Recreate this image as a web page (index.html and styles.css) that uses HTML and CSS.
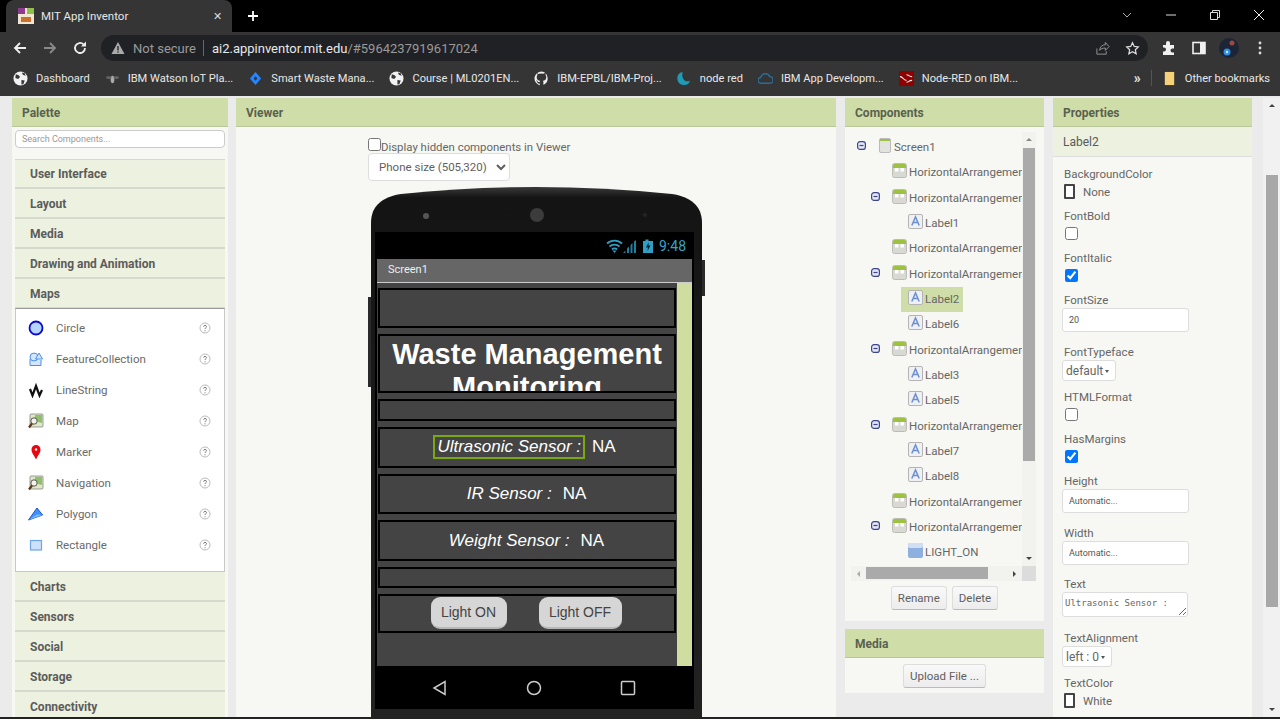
FILE: index.html
```html
<!DOCTYPE html>
<html lang="en">
<head>
  <meta charset="UTF-8" />
  <title>MIT App Inventor</title>
  <link rel="stylesheet" href="styles.css">
</head>
<body>

  <!-- icon sprites -->
  <svg class="sprites" width="0" height="0">
    <symbol id="i-globe" viewBox="0 0 16 16">
      <circle cx="8" cy="8" r="7.5" fill="#f1f1f1"/>
      <path d="M3 3.5l3 1 1.5 2-2 2-3-1zM9 9.5l3.5.5-1.5 4-2 .5zM9.5 1.5l1 2.5 3 1-1-2.5z" fill="#35363a"/>
    </symbol>
    <symbol id="i-help" viewBox="0 0 12 12">
      <circle cx="6" cy="6" r="5" fill="#fff" stroke="#bbb" stroke-width="1"/>
      <path d="M4.6 4.7c0-1.8 2.9-1.800 2.900 0 0 1.100-1.500 1.100-1.500 2.300M6 8.300v1" fill="none" stroke="#777" stroke-width="1"/>
    </symbol>
    <symbol id="i-arrangement" viewBox="0 0 15 15">
      <rect x=".5" y=".5" width="14" height="14" rx="2" fill="#d9d9d4" stroke="#bcbcb4"/>
      <path d="M1 2.5A1.5 1.5 0 0 1 2.500 1h10A1.500 1.500 0 0 1 14 2.500V5H1z" fill="#9cc23f"/>
      <rect x="3" y="5" width="3.500" height="3.500" fill="#fff"/>
      <rect x="8.500" y="5" width="3.500" height="3.500" fill="#fff"/>
    </symbol>
    <symbol id="i-label" viewBox="0 0 15 15">
      <rect x=".5" y=".5" width="14" height="14" rx="1.5" fill="#eef0f4" stroke="#b4b4b4"/>
      <path d="M3.800 11.500L7.500 3l3.700 8.500M5.200 8.500h4.600" fill="none" stroke="#6d8fd0" stroke-width="1.5"/>
    </symbol>
    <symbol id="i-toggle" viewBox="0 0 9 9">
      <rect x=".6" y=".6" width="7.800" height="7.800" rx="2.500" fill="#e4e6f4" stroke="#3c4590" stroke-width="1.200"/>
      <path d="M2.500 4.500h4" stroke="#3c4590" stroke-width="1.200"/>
    </symbol>
    <symbol id="i-mapicon" viewBox="0 0 16 16">
      <rect x="2" y="1" width="13" height="13" rx="1" fill="#dfe8c8" stroke="#777" stroke-width=".7"/>
      <path d="M7 2h7v8l-4-1-3-4z" fill="#8fc06b"/>
      <circle cx="6" cy="8" r="3.200" fill="#f2f2e6" stroke="#555"/>
      <path d="M4 10.500L1 14.500" stroke="#5b3a1c" stroke-width="2.200"/>
    </symbol>
  </svg>

  <div class="browser">
    <div class="tab-strip">
      <div class="tab">
        <svg class="favicon" viewBox="0 0 16 16">
          <rect width="16" height="16" fill="#f0e6d2"/>
          <rect width="7" height="6" fill="#8e3a8e"/>
          <rect x="9" width="7" height="6" fill="#8fc04a"/>
          <rect x="3" y="9" width="10" height="5" fill="#c9702c"/>
        </svg>
        <span class="tab-title">MIT App Inventor</span>
        <span class="tab-close">✕</span>
      </div>
      <svg class="new-tab" viewBox="0 0 12 12"><path d="M6 1v10M1 6h10" stroke="#fff" stroke-width="1.800"/></svg>
      <div class="window-controls">
        <svg viewBox="0 0 12 12"><path d="M2 4l4 4 4-4" fill="none" stroke="#aaa"/></svg>
        <svg viewBox="0 0 12 12"><path d="M1 6h10" stroke="#ddd"/></svg>
        <svg viewBox="0 0 12 12"><path d="M1.500 3.500h7v7h-7zM3.500 3.500v-2h7v7h-2" fill="none" stroke="#ddd"/></svg>
        <svg viewBox="0 0 12 12"><path d="M1 1l10 10M11 1L1 11" stroke="#eee"/></svg>
      </div>
    </div>

    <div class="toolbar">
      <svg class="nav-icon" viewBox="0 0 16 16"><path d="M14 8H3M8 3L3 8l5 5" fill="none" stroke="#eee" stroke-width="1.800"/></svg>
      <svg class="nav-icon" viewBox="0 0 16 16"><path d="M2 8h11M8 3l5 5-5 5" fill="none" stroke="#8a8a8a" stroke-width="1.800"/></svg>
      <svg class="nav-icon" viewBox="0 0 16 16"><path d="M13 8a5 5 0 1 1-1.500-3.600" fill="none" stroke="#eee" stroke-width="1.800"/><path d="M14 1.500v5h-5z" fill="#eee"/></svg>
      <div class="omnibox">
        <svg class="warn" viewBox="0 0 14 14"><path d="M7 1l6.500 12H.5z" fill="#aaa"/><path d="M7 5v4.500M7 10.500v1.200" stroke="#202124" stroke-width="1.300"/></svg>
        <span class="not-secure">Not secure</span>
        <span class="omni-sep"></span>
        <span class="url"><b>ai2.appinventor.mit.edu</b>/#5964237919617024</span>
        <svg class="omni-icon" viewBox="0 0 16 16"><path d="M2 8v6h10v-3M5 10c0-4 3-6 6-6V1.500L15 6l-4 4V7.500c-3 0-5 1-6 2.500z" fill="none" stroke="#999"/></svg>
        <svg class="omni-icon" viewBox="0 0 16 16"><path d="M8 1.800l1.900 4 4.300.5-3.200 3 .9 4.300L8 11.400l-3.900 2.200.9-4.300-3.200-3 4.300-.5z" fill="none" stroke="#ddd" stroke-width="1.300"/></svg>
      </div>
      <div class="toolbar-end">
        <svg class="nav-icon" viewBox="0 0 16 16"><path d="M2 5h3V3a2 2 0 0 1 4 0v2h4v3.500h-1.500a2 2 0 0 0 0 4H13V15H2v-3.500h1a2 2 0 0 0 0-4H2z" fill="#f0f0f0"/></svg>
        <svg class="nav-icon" viewBox="0 0 16 16"><rect x="2" y="2.500" width="12" height="11" fill="none" stroke="#f0f0f0" stroke-width="1.600"/><rect x="9" y="3" width="5" height="10" fill="#f0f0f0"/></svg>
        <svg class="avatar" viewBox="0 0 20 20"><circle cx="10" cy="10" r="10" fill="#1c2438"/><circle cx="8" cy="14" r="3.500" fill="#2f8fe0"/><circle cx="13" cy="5" r="2.500" fill="#9a4b3c"/><circle cx="8" cy="14" r="1.200" fill="#cfe8ff"/></svg>
        <svg class="menu-dots" viewBox="0 0 4 16"><circle cx="2" cy="3" r="1.400" fill="#ddd"/><circle cx="2" cy="8" r="1.400" fill="#ddd"/><circle cx="2" cy="13" r="1.400" fill="#ddd"/></svg>
      </div>
    </div>

    <div class="bookmarks">
      <a class="bookmark"><svg><use href="#i-globe"/></svg>Dashboard</a>
      <a class="bookmark"><svg viewBox="0 0 16 16"><ellipse cx="8" cy="9" rx="2" ry="4" fill="#aaa"/><ellipse cx="4" cy="7" rx="3" ry="1.500" fill="#666"/><ellipse cx="12" cy="7" rx="3" ry="1.500" fill="#666"/></svg>IBM Watson IoT Pla...</a>
      <a class="bookmark"><svg viewBox="0 0 16 16"><path d="M8 1l6 7-6 7-6-7z" fill="#2684ff"/><path d="M8 5.500L10 8l-2 2.500L6 8z" fill="#35363a"/></svg>Smart Waste Mana...</a>
      <a class="bookmark"><svg><use href="#i-globe"/></svg>Course | ML0201EN...</a>
      <a class="bookmark"><svg viewBox="0 0 16 16"><path d="M8 .5a7.500 7.500 0 0 0-2.400 14.600c.4.100.5-.2.500-.4v-1.500c-2 .4-2.500-.9-2.600-1.300-.1-.3-.5-1-.9-1.200-.3-.2-.7-.6 0-.6.6 0 1.100.6 1.200.8.700 1.200 1.900.9 2.300.7.100-.5.300-.9.500-1.100-1.800-.2-3.700-.9-3.700-4 0-.9.300-1.600.8-2.200-.1-.2-.3-1 .1-2.100 0 0 .7-.2 2.200.8a7.500 7.500 0 0 1 4 0c1.500-1 2.200-.8 2.200-.8.400 1.100.2 1.900.1 2.100.5.6.8 1.300.8 2.200 0 3.100-1.900 3.800-3.700 4 .3.300.6.800.6 1.500v2.200c0 .2.100.5.500.4A7.500 7.500 0 0 0 8 .5z" fill="#f0f0f0"/></svg>IBM-EPBL/IBM-Proj...</a>
      <a class="bookmark"><svg viewBox="0 0 16 16"><path d="M6 1a7 7 0 1 0 8 9C10 13 4 9 6 1z" fill="#1f9bb5"/></svg>node red</a>
      <a class="bookmark"><svg viewBox="0 0 16 16"><path d="M3 13a3 3 0 0 1 0-6 5 5 0 0 1 9.500-1 3.500 3.500 0 0 1 0 7z" fill="none" stroke="#2a6d96" stroke-width="1.500"/></svg>IBM App Developm...</a>
      <a class="bookmark"><svg viewBox="0 0 16 16"><rect width="16" height="16" fill="#8f0000"/><path d="M1 6c4 0 3 4 7 4M8 4c3 0 2 2 6 2M8 12c3 0 2-2 6-2" fill="none" stroke="#eee" stroke-width="1.200"/></svg>Node-RED on IBM...</a>
      <span class="bookmarks-more">»</span>
      <span class="bookmarks-sep"></span>
      <a class="bookmark"><svg viewBox="0 0 16 16"><path d="M3 1h10v14H3z" fill="#f5d27a"/></svg>Other bookmarks</a>
    </div>
  </div>

  <div class="workspace">

    <!-- Palette -->
    <section class="panel palette">
      <h3 class="panel-head">Palette</h3>
      <input class="search" type="text" placeholder="Search Components..." />
      <div class="drawer first">User Interface</div>
      <div class="drawer">Layout</div>
      <div class="drawer">Media</div>
      <div class="drawer">Drawing and Animation</div>
      <div class="drawer">Maps</div>
      <ul class="palette-list">
        <li>
          <svg class="pal-icon" viewBox="0 0 16 16"><circle cx="8" cy="8" r="6.500" fill="#b5d5ff" stroke="#0a0ad0" stroke-width="1.800"/></svg>
          <span>Circle</span><svg class="help"><use href="#i-help"/></svg>
        </li>
        <li>
          <svg class="pal-icon" viewBox="0 0 16 16"><path d="M2 8v6.500h11V9" fill="#d4e6ff" stroke="#4a90e8"/><circle cx="6" cy="6" r="4" fill="#d4e6ff" stroke="#4a90e8"/><path d="M11 2l3.500 6h-7z" fill="#d4e6ff" stroke="#4a90e8"/></svg>
          <span>FeatureCollection</span><svg class="help"><use href="#i-help"/></svg>
        </li>
        <li>
          <svg class="pal-icon" viewBox="0 0 16 16"><path d="M2 7l2.500 6.500L8 4l3.500 9.500L14 8" fill="none" stroke="#111" stroke-width="2.200"/></svg>
          <span>LineString</span><svg class="help"><use href="#i-help"/></svg>
        </li>
        <li>
          <svg class="pal-icon"><use href="#i-mapicon"/></svg>
          <span>Map</span><svg class="help"><use href="#i-help"/></svg>
        </li>
        <li>
          <svg class="pal-icon" viewBox="0 0 16 16"><path d="M8 15.500C6 11 3.500 9 3.500 5.500a4.500 4.500 0 0 1 9 0C12.500 9 10 11 8 15.500z" fill="#e8060f"/><circle cx="8" cy="5.500" r="1.200" fill="#fff"/></svg>
          <span>Marker</span><svg class="help"><use href="#i-help"/></svg>
        </li>
        <li>
          <svg class="pal-icon"><use href="#i-mapicon"/></svg>
          <span>Navigation</span><svg class="help"><use href="#i-help"/></svg>
        </li>
        <li>
          <svg class="pal-icon" viewBox="0 0 16 16"><path d="M.5 14L9 2l5.500 7z" fill="#3d94f6" stroke="#1a4fe0"/><path d="M.5 14L9 8.500l5.500.5" fill="#7fb8fa"/></svg>
          <span>Polygon</span><svg class="help"><use href="#i-help"/></svg>
        </li>
        <li>
          <svg class="pal-icon" viewBox="0 0 16 16"><rect x="2.500" y="3.500" width="11" height="9.500" fill="#cfe0fa" stroke="#6ea4ea" stroke-width="1.200"/></svg>
          <span>Rectangle</span><svg class="help"><use href="#i-help"/></svg>
        </li>
      </ul>
      <div class="drawer">Charts</div>
      <div class="drawer">Sensors</div>
      <div class="drawer">Social</div>
      <div class="drawer">Storage</div>
      <div class="drawer">Connectivity</div>
    </section>

    <!-- Viewer -->
    <section class="panel viewer">
      <h3 class="panel-head">Viewer</h3>
      <div class="viewer-body">
        <label class="hidden-toggle"><input type="checkbox" />Display hidden components in Viewer</label>
        <select class="phone-size"><option>Phone size (505,320)</option></select>

        <div class="phone">
          <svg class="phone-shell" viewBox="0 0 331 530">
            <defs>
              <linearGradient id="shell" x1="0" y1="0" x2="0" y2="1">
                <stop offset="0" stop-color="#3a3a3a"/>
                <stop offset=".02" stop-color="#141414"/>
                <stop offset="1" stop-color="#222"/>
              </linearGradient>
            </defs>
            <path d="M0 530V36C0 18 12 10 30 7Q165-7 301 7C319 10 331 18 331 36V530Z" fill="url(#shell)"/>
            <circle cx="55" cy="29" r="3" fill="#555"/>
            <circle cx="166" cy="28" r="7" fill="#3c3c3c"/>
            <circle cx="274" cy="28" r="2" fill="#242424"/>
          </svg>
          <span class="phone-btn volume"></span>
          <span class="phone-btn power"></span>

          <div class="phone-screen">
            <div class="status-bar">
              <svg class="status-icons" viewBox="0 0 48 14">
                <path d="M1 4.500a11 11 0 0 1 15 0M3.500 7.500a7.500 7.500 0 0 1 10 0M6 10.500a3.500 3.500 0 0 1 5 0" fill="none" stroke="#2f9fc4" stroke-width="1.800"/>
                <path d="M8.500 14l-2-2.500h4z" fill="#2f9fc4"/>
                <path d="M17 14l2.500-2.500V14zM21 14V9.500l2-2V14zM24.500 14V6l2-2v10zM28 14V2.500L30 1v13z" fill="#1f7f9e"/>
                <path d="M37 2h2.500V.5h3V2H47v12H37z" fill="#2f9fc4" transform="translate(0 0) scale(1 1)"/>
                <path d="M42.500 3.500L40 8.500h2l-.5 3.500 3-5.500h-2z" fill="#06222c"/>
              </svg>
              <span class="clock">9:48</span>
            </div>
            <div class="title-bar">Screen1</div>
            <div class="screen-area">
              <div class="form">
                <div class="arrangement h-40"></div>
                <div class="arrangement h-59 app-title">Waste Management Monitoring</div>
                <div class="arrangement h-22"></div>
                <div class="arrangement sensor">
                  <span class="sensor-name selected">Ultrasonic Sensor :</span>
                  <span class="sensor-value">NA</span>
                </div>
                <div class="arrangement sensor">
                  <span class="sensor-name">IR Sensor :</span>
                  <span class="sensor-value">NA</span>
                </div>
                <div class="arrangement sensor">
                  <span class="sensor-name">Weight Sensor :</span>
                  <span class="sensor-value">NA</span>
                </div>
                <div class="arrangement h-21"></div>
                <div class="arrangement h-38 buttons">
                  <button class="phone-button light-on">Light ON</button>
                  <button class="phone-button light-off">Light OFF</button>
                </div>
              </div>
              <div class="form-scroll"></div>
            </div>
            <div class="nav-bar">
              <svg viewBox="0 0 16 16"><path d="M13 1.500v13L2 8z" fill="none" stroke="#ccc" stroke-width="1.500"/></svg>
              <svg viewBox="0 0 16 16"><circle cx="8" cy="8" r="6.500" fill="none" stroke="#ccc" stroke-width="1.500"/></svg>
              <svg viewBox="0 0 16 16"><rect x="1.500" y="1.500" width="13" height="13" rx="1" fill="none" stroke="#ccc" stroke-width="1.500"/></svg>
            </div>
          </div>
        </div>
      </div>
    </section>

    <!-- Components + Media -->
    <div class="middle-col">
      <section class="panel components">
        <h3 class="panel-head">Components</h3>
        <div class="tree-box">
          <div class="tree">
            <div class="tree-row root">
              <svg class="toggle"><use href="#i-toggle"/></svg>
              <svg class="tree-icon" viewBox="0 0 12 15"><rect x=".5" y=".5" width="11" height="14" rx="1.500" fill="#e2e2de" stroke="#bbb"/><path d="M1 1h10v2H1z" fill="#9cc23f"/></svg>
              <span>Screen1</span>
            </div>
            <div class="tree-row branch">
              <span class="toggle"></span><svg class="tree-icon"><use href="#i-arrangement"/></svg><span>HorizontalArrangement1</span>
            </div>
            <div class="tree-row branch">
              <svg class="toggle"><use href="#i-toggle"/></svg><svg class="tree-icon"><use href="#i-arrangement"/></svg><span>HorizontalArrangement2</span>
            </div>
            <div class="tree-row leaf">
              <span class="leaf-item"><svg class="tree-icon"><use href="#i-label"/></svg><span>Label1</span></span>
            </div>
            <div class="tree-row branch">
              <span class="toggle"></span><svg class="tree-icon"><use href="#i-arrangement"/></svg><span>HorizontalArrangement3</span>
            </div>
            <div class="tree-row branch">
              <svg class="toggle"><use href="#i-toggle"/></svg><svg class="tree-icon"><use href="#i-arrangement"/></svg><span>HorizontalArrangement4</span>
            </div>
            <div class="tree-row leaf">
              <span class="leaf-item active"><svg class="tree-icon"><use href="#i-label"/></svg><span>Label2</span></span>
            </div>
            <div class="tree-row leaf">
              <span class="leaf-item"><svg class="tree-icon"><use href="#i-label"/></svg><span>Label6</span></span>
            </div>
            <div class="tree-row branch">
              <svg class="toggle"><use href="#i-toggle"/></svg><svg class="tree-icon"><use href="#i-arrangement"/></svg><span>HorizontalArrangement5</span>
            </div>
            <div class="tree-row leaf">
              <span class="leaf-item"><svg class="tree-icon"><use href="#i-label"/></svg><span>Label3</span></span>
            </div>
            <div class="tree-row leaf">
              <span class="leaf-item"><svg class="tree-icon"><use href="#i-label"/></svg><span>Label5</span></span>
            </div>
            <div class="tree-row branch">
              <svg class="toggle"><use href="#i-toggle"/></svg><svg class="tree-icon"><use href="#i-arrangement"/></svg><span>HorizontalArrangement6</span>
            </div>
            <div class="tree-row leaf">
              <span class="leaf-item"><svg class="tree-icon"><use href="#i-label"/></svg><span>Label7</span></span>
            </div>
            <div class="tree-row leaf">
              <span class="leaf-item"><svg class="tree-icon"><use href="#i-label"/></svg><span>Label8</span></span>
            </div>
            <div class="tree-row branch">
              <span class="toggle"></span><svg class="tree-icon"><use href="#i-arrangement"/></svg><span>HorizontalArrangement7</span>
            </div>
            <div class="tree-row branch">
              <svg class="toggle"><use href="#i-toggle"/></svg><svg class="tree-icon"><use href="#i-arrangement"/></svg><span>HorizontalArrangement8</span>
            </div>
            <div class="tree-row leaf">
              <span class="leaf-item"><svg class="tree-icon" viewBox="0 0 15 15"><rect width="15" height="15" rx="2" fill="#8fb0de"/><rect width="15" height="5" rx="2" fill="#d2dff2"/></svg><span>LIGHT_ON</span></span>
            </div>
          </div>
          <div class="vscroll">
            <span class="arrow-up"></span>
            <span class="vthumb"></span>
            <span class="arrow-down"></span>
          </div>
          <div class="hscroll">
            <span class="arrow-left"></span>
            <span class="hthumb"></span>
            <span class="arrow-right"></span>
          </div>
          <div class="scroll-corner"></div>
        </div>
        <div class="tree-actions">
          <button class="gwt-btn">Rename</button>
          <button class="gwt-btn">Delete</button>
        </div>
      </section>

      <section class="panel media">
        <h3 class="panel-head">Media</h3>
        <div class="media-body"><button class="gwt-btn">Upload File ...</button></div>
      </section>
    </div>

    <!-- Properties -->
    <section class="panel properties">
      <h3 class="panel-head">Properties</h3>
      <div class="prop-sub">Label2</div>
      <div class="prop-list">
        <div class="prop"><span class="prop-name">BackgroundColor</span><span class="swatch-row"><i class="swatch"></i>None</span></div>
        <div class="prop"><span class="prop-name">FontBold</span><input type="checkbox" /></div>
        <div class="prop"><span class="prop-name">FontItalic</span><input type="checkbox" checked /></div>
        <div class="prop tall"><span class="prop-name">FontSize</span><input class="prop-input" type="text" value="20" /></div>
        <div class="prop mid"><span class="prop-name">FontTypeface</span><span class="prop-select w-54">default</span></div>
        <div class="prop"><span class="prop-name">HTMLFormat</span><input type="checkbox" /></div>
        <div class="prop"><span class="prop-name">HasMargins</span><input type="checkbox" checked /></div>
        <div class="prop tall"><span class="prop-name">Height</span><input class="prop-input" type="text" value="Automatic..." /></div>
        <div class="prop width"><span class="prop-name">Width</span><input class="prop-input" type="text" value="Automatic..." /></div>
        <div class="prop text"><span class="prop-name">Text</span><textarea class="prop-area">Ultrasonic Sensor :</textarea></div>
        <div class="prop mid"><span class="prop-name">TextAlignment</span><span class="prop-select w-50">left : 0</span></div>
        <div class="prop"><span class="prop-name">TextColor</span><span class="swatch-row"><i class="swatch"></i>White</span></div>
      </div>
    </section>

    <div class="page-scroll">
      <span class="arrow-up"></span>
      <span class="page-thumb"></span>
      <span class="arrow-down"></span>
    </div>
  </div>

  <div class="taskbar"></div>

</body>
</html>
```

FILE: styles.css
```css
:root {
  --chrome: #353535;
  --head: #cfdea8;
  --panel: #f7f8f3;
  --drawer: #edf1df;
  --text: #5a5a5a;
}

* {
  box-sizing: border-box;
}

html, body {
  margin: 0;
  height: 719px;
  overflow: hidden;
}

body {
  display: flex;
  flex-direction: column;
  font-family: Roboto, sans-serif;
  font-size: 11.5px;
  color: var(--text);
  background: #e9e9e9;
}

.sprites {
  position: absolute;
}

/* browser frame */
.browser {
  flex: none;
  height: 96px;
  color: #e8e8e8;
}

.tab-strip {
  height: 32px;
  background: #000;
  display: flex;
  align-items: center;
}

.tab {
  width: 226px;
  height: 32px;
  margin-left: 6px;
  padding: 0 10px 0 12px;
  display: flex;
  align-items: center;
  background: var(--chrome);
  border-radius: 8px 8px 0 0;
}

.favicon {
  width: 16px;
  height: 16px;
  margin-right: 7px;
}

.tab-title {
  flex: 1;
  font-size: 11.5px;
  color: #e6e6e6;
}

.tab-close {
  font-size: 11px;
  color: #ddd;
}

.new-tab {
  width: 12px;
  height: 12px;
  margin-left: 15px;
}

.window-controls {
  margin-left: auto;
  display: flex;
  align-items: center;
  gap: 32px;
  padding-right: 15px;
  margin-top: -3px;
}

.window-controls svg {
  width: 12px;
  height: 12px;
}

.toolbar {
  height: 32px;
  background: var(--chrome);
  display: flex;
  align-items: center;
  padding-left: 12px;
  gap: 14px;
}

.nav-icon {
  width: 16px;
  height: 16px;
}

.omnibox {
  width: 1047px;
  height: 26px;
  margin-left: -1px;
  border-radius: 13px;
  background: #202124;
  display: flex;
  align-items: center;
  padding: 0 8px 0 10px;
  font-size: 13px;
}

.warn {
  width: 14px;
  height: 14px;
  margin-right: 8px;
}

.not-secure {
  color: #9a9a9a;
}

.omni-sep {
  width: 1px;
  height: 16px;
  background: #666;
  margin: 0 8px 0 7px;
}

.url {
  flex: 1;
  color: #9a9a9a;
}

.url b {
  font-weight: 400;
  color: #e8e8e8;
}

.omni-icon {
  width: 15px;
  height: 15px;
  margin-left: 15px;
}

.toolbar-end {
  display: flex;
  align-items: center;
  gap: 14px;
  margin-left: -1px;
}

.avatar {
  width: 20px;
  height: 20px;
  margin-left: -2px;
}

.menu-dots {
  width: 4px;
  height: 16px;
  margin-left: 5px;
}

.bookmarks {
  height: 32px;
  background: var(--chrome);
  display: flex;
  align-items: center;
  padding: 0 0 4px 13px;
  gap: 15px;
}

.bookmark {
  display: flex;
  align-items: center;
  white-space: nowrap;
  font-size: 11.1px;
  color: #e8e8e8;
}

.bookmark svg {
  width: 15px;
  height: 15px;
  margin-right: 8px;
}

.bookmarks-more {
  margin-left: auto;
  font-size: 14px;
  font-weight: 700;
}

.bookmarks-sep {
  width: 1px;
  height: 16px;
  background: #555;
  margin: 0 -5px;
}

.bookmarks a:last-child {
  padding-right: 10px;
}

/* workspace */
.workspace {
  flex: 1;
  min-height: 0;
  display: flex;
  align-items: stretch;
  padding: 2px 0 0 12px;
  overflow: hidden;
  background-color: #ebebeb;
}

.panel {
  background: var(--panel);
  overflow: hidden;
}

.panel-head {
  height: 29px;
  margin: 0;
  padding: 0 10px;
  line-height: 31px;
  font-size: 12px;
  font-weight: 700;
  color: #5a6150;
  background: var(--head);
  border-bottom: 1px solid #b9c69a;
}

/* palette */
.palette {
  width: 216px;
  margin-right: 8px;
}

.search {
  display: block;
  width: 210px;
  height: 18px;
  margin: 3px 3px 11px;
  padding: 0 6px;
  font: 9px Roboto, sans-serif;
  background: #fff;
  border: 1px solid #ccc;
  border-radius: 4px;
}

.search::placeholder {
  color: #999;
}

.drawer {
  height: 30px;
  margin: 0 3px;
  padding-left: 15px;
  line-height: 30px;
  font-weight: 700;
  font-size: 12px;
  color: #5c5c5c;
  background: var(--drawer);
  border-bottom: 2px solid #d6d9cd;
}

.drawer.first {
  border-top: 1px solid #d6d9cd;
  line-height: 28px;
}

.palette-list {
  list-style: none;
  margin: -1px 3px 0;
  padding: 3px 0 11px;
  height: 264px;
  background: #fff;
  border: 1px solid #c8c8c8;
  border-top-color: #999;
}

.palette-list li {
  height: 31px;
  display: flex;
  align-items: center;
  padding: 0 13px 0 12px;
  color: #6a6a6a;
}

.pal-icon {
  width: 16px;
  height: 16px;
  margin-right: 12px;
}

.palette-list span {
  flex: 1;
}

.help {
  width: 12px;
  height: 12px;
}

/* viewer */
.viewer {
  width: 600px;
  margin-right: 9px;
}

.viewer-body {
  padding: 11px 0 0 132px;
}

.hidden-toggle {
  display: flex;
  align-items: center;
  height: 17px;
  font-size: 11.4px;
  color: #666;
}

.hidden-toggle input {
  width: 13px;
  height: 13px;
  margin: 0 0 4px;
}

.phone-size {
  display: block;
  width: 142px;
  height: 28px;
  margin-top: -2px;
  padding-left: 6px;
  font: 11.5px Roboto, sans-serif;
  color: #5f5f5f;
  background: #fff;
  border: 1px solid #ddd;
  border-radius: 4px;
}

.phone {
  position: relative;
  width: 331px;
  height: 530px;
  margin: 6px 0 0 3px;
  padding: 45px 8px 0 4px;
}

.phone-shell {
  position: absolute;
  left: 0;
  top: 0;
  width: 331px;
  height: 530px;
}

.phone-btn {
  position: absolute;
  width: 3px;
  background: #2a2a2a;
}

.phone-btn.volume {
  left: -3px;
  top: 110px;
  height: 90px;
}

.phone-btn.power {
  right: -3px;
  top: 73px;
  height: 36px;
}

.phone-screen {
  position: relative;
  height: 477px;
  padding: 0 2px;
  background: #000;
  display: flex;
  flex-direction: column;
}

.status-bar {
  height: 27px;
  flex: none;
  display: flex;
  align-items: center;
  justify-content: flex-end;
  padding-right: 6px;
  color: #33a5cc;
  font-size: 14px;
}

.status-icons {
  width: 48px;
  height: 14px;
  margin-right: 5px;
}

.title-bar {
  flex: none;
  height: 24px;
  padding-left: 11px;
  line-height: 22px;
  font-size: 11px;
  color: #eee;
  background: #666;
  border-bottom: 1px solid #ccc;
}

.screen-area {
  flex: 1;
  min-height: 0;
  display: flex;
  background: #444;
}

.form {
  width: 300px;
  padding: 5px 1px 0;
  display: flex;
  flex-direction: column;
  gap: 6px;
}

.form-scroll {
  width: 15px;
  background: #cfdea0;
}

.arrangement {
  flex: none;
  border: 2px solid #000;
  background: #444;
  overflow: hidden;
  color: #fff;
  font-family: "Liberation Sans", Arial, sans-serif;
}

.h-40 { height: 40px; }
.h-59 { height: 59px; }
.h-22 { height: 22px; }
.h-21 { height: 21px; }
.h-38 { height: 39px; }

.app-title {
  padding: 2px 10px 0;
  text-align: center;
  font-size: 29px;
  font-weight: 700;
  line-height: 33px;
}

.sensor {
  height: 40.67px;
  display: flex;
  align-items: center;
  justify-content: center;
  gap: 7px;
  padding-right: 5px;
}

.sensor-name {
  font-size: 17px;
  font-style: italic;
  white-space: pre;
  padding: 0 2px;
  border: 2px solid transparent;
}

.sensor-name.selected {
  border-color: #7aa80f;
}

.sensor-value {
  font-size: 17px;
}

.buttons {
  display: flex;
  align-items: center;
  justify-content: center;
  gap: 32px;
  padding-right: 2px;
  overflow: visible;
}

.phone-button {
  height: 32px;
  padding: 0;
  font: 14px "Liberation Sans", Arial, sans-serif;
  color: #444;
  background: #d6d6d6;
  border: 0;
  border-bottom: 2px solid #b8b8b8;
  border-radius: 9px;
}

.light-on { width: 76px; }
.light-off { width: 83px; }

.nav-bar {
  flex: none;
  height: 43px;
  margin: 0 -2px;
  background: #000;
  display: flex;
  align-items: center;
  justify-content: center;
  gap: 78px;
  padding-right: 1px;
}

.nav-bar svg {
  width: 16px;
  height: 16px;
}

/* components */
.middle-col {
  width: 199px;
  margin-right: 9px;
  display: flex;
  flex-direction: column;
  gap: 8px;
}

.components {
  height: 523px;
  flex: none;
}

.tree-box {
  height: 450px;
  margin: 5px 8px 0 6px;
  display: grid;
  grid-template-columns: 171px 14px;
  grid-template-rows: 434px 15px;
}

.tree {
  overflow: hidden;
  padding-top: 3px;
}

.tree-row {
  height: 25.33px;
  display: flex;
  align-items: center;
  white-space: nowrap;
  color: #666;
}

.tree-row span {
  line-height: 15px;
}

.tree-row.root {
  padding-left: 6px;
}

.tree-row.root .toggle {
  margin-right: 13px;
}

.tree-row.root .tree-icon {
  width: 12px;
  height: 15px;
  margin-right: 3px;
}

.tree-row.branch {
  padding-left: 20px;
}

.toggle {
  flex: none;
  display: block;
  width: 9px;
  height: 9px;
  margin-right: 12px;
  margin-top: -4px;
}

.tree-icon {
  flex: none;
  width: 15px;
  height: 15px;
  margin-right: 2px;
  margin-top: -4px;
}

.tree-row.leaf {
  padding-left: 50px;
}

.leaf-item {
  display: flex;
  align-items: center;
  height: 25px;
  padding: 0 4px 0 7px;
}

.leaf-item.active {
  background: var(--head);
}

.vscroll {
  position: relative;
  background: #f2f2ee;
  display: flex;
  flex-direction: column;
  align-items: center;
}

.vthumb {
  position: absolute;
  top: 16px;
  left: 1px;
  width: 12px;
  height: 313px;
  background: #aaa;
}

.arrow-up, .arrow-down {
  width: 0;
  height: 0;
  border-left: 3px solid transparent;
  border-right: 3px solid transparent;
}

.arrow-up {
  margin-top: 6px;
  border-bottom: 3px solid #888;
}

.arrow-down {
  margin-top: auto;
  margin-bottom: 6px;
  border-top: 3px solid #444;
}

.hscroll {
  position: relative;
  background: #f2f2ee;
  display: flex;
  align-items: center;
  justify-content: space-between;
  padding: 0 6px;
}

.hthumb {
  position: absolute;
  left: 15px;
  top: 1px;
  width: 122px;
  height: 12px;
  background: #aaa;
}

.arrow-left, .arrow-right {
  width: 0;
  height: 0;
  border-top: 3px solid transparent;
  border-bottom: 3px solid transparent;
}

.arrow-left {
  border-right: 3px solid #aaa;
}

.arrow-right {
  border-left: 3px solid #444;
}

.scroll-corner {
  background: #dcdcdc;
}

.tree-actions {
  display: flex;
  justify-content: center;
  gap: 5px;
  margin-top: 4px;
}

.gwt-btn {
  height: 24px;
  padding: 0 6px;
  font: 11.5px Roboto, sans-serif;
  color: #5f5f5f;
  background: linear-gradient(#f9f9f9, #ececec);
  border: 1px solid #ddd;
  border-bottom-color: #bbb;
  border-radius: 3px;
}

.media {
  height: 64px;
  flex: none;
}

.media-body {
  display: flex;
  justify-content: center;
  padding-top: 6px;
}

/* properties */
.properties {
  width: 199px;
  flex: none;
}

.prop-sub {
  height: 30px;
  padding-left: 10px;
  line-height: 31px;
  font-size: 12px;
  color: #5a5a5a;
  background: var(--drawer);
  border-bottom: 1px solid #ddd;
}

.prop-list {
  padding: 10px 0 0 9px;
}

.prop {
  display: flex;
  flex-direction: column;
  align-items: flex-start;
  height: 42px;
  color: #666;
}

.prop.tall { height: 52px; }
.prop.width { height: 51px; }
.prop.text { height: 54px; }
.prop.mid { height: 45px; }

.prop-name {
  height: 15px;
  line-height: 15px;
  margin: 0 0 2px 2px;
}

.prop input[type="checkbox"] {
  width: 13px;
  height: 13px;
  margin: 1px 0 0 3px;
}

.swatch-row {
  display: flex;
  align-items: center;
  margin-left: 2px;
  gap: 8px;
}

.swatch {
  display: block;
  width: 11px;
  height: 15px;
  background: #fff;
  border: 2px solid #444;
  border-radius: 1px;
}

.prop-input {
  width: 127px;
  height: 24px;
  margin-top: -2px;
  padding: 0 6px;
  font: 9px Roboto, sans-serif;
  color: #555;
  background: #fff;
  border: 1px solid #ddd;
  border-radius: 3px;
}

.prop-area {
  width: 126px;
  height: 25px;
  margin-top: -2px;
  padding: 5px 2px;
  font: 9px "DejaVu Sans Mono", monospace;
  color: #666;
  background: #fff;
  border: 1px solid #ddd;
  border-radius: 3px;
}

.prop-select {
  position: relative;
  display: flex;
  align-items: center;
  height: 21px;
  margin-top: -2px;
  padding-left: 3px;
  font-size: 12px;
  color: #666;
  background: #fff;
  border: 1px solid #ddd;
  border-radius: 3px;
}

.prop-select::after {
  content: "";
  position: absolute;
  right: 6px;
  top: 9px;
  border-left: 2px solid transparent;
  border-right: 2px solid transparent;
  border-top: 3px solid #555;
}

.w-54 { width: 54px; }
.w-50 { width: 50px; }

/* page scrollbar */
.page-scroll {
  position: relative;
  width: 17px;
  margin-left: auto;
  background: #f1f1f1;
  display: flex;
  flex-direction: column;
  align-items: center;
}

.page-scroll .arrow-up {
  border-bottom-color: #444;
}

.page-thumb {
  position: absolute;
  top: 77px;
  left: 3px;
  width: 12px;
  height: 432px;
  background: #a8a8a8;
}

.taskbar {
  flex: none;
  height: 2px;
  background: #222;
}
```
